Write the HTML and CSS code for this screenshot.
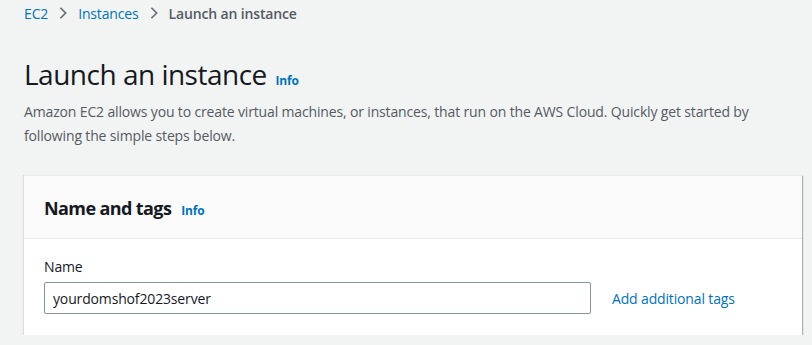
FILE: index.html
```html
<!DOCTYPE html>
<html lang="en">
<head>
    <meta charset="UTF-8">
    <meta name="viewport" content="width=device-width, initial-scale=1.0">
    <title>Launch an instance | EC2</title>
    <link rel="stylesheet" href="styles.css">
</head>
<body>
    <div class="page">
        <nav class="breadcrumbs">
            <a href="#">EC2</a>
            <svg class="chevron" viewBox="0 0 16 16" width="16" height="16"><path d="M5 2l6 6-6 6" fill="none" stroke="currentColor" stroke-width="2"/></svg>
            <a href="#">Instances</a>
            <svg class="chevron" viewBox="0 0 16 16" width="16" height="16"><path d="M5 2l6 6-6 6" fill="none" stroke="currentColor" stroke-width="2"/></svg>
            <span class="current">Launch an instance</span>
        </nav>

        <header class="page-header">
            <h1>Launch an instance <a href="#" class="info">Info</a></h1>
            <p>Amazon EC2 allows you to create virtual machines, or instances, that run on the AWS Cloud. Quickly get started by following the simple steps below.</p>
        </header>

        <section class="panel">
            <div class="panel-header">
                <h2>Name and tags <a href="#" class="info">Info</a></h2>
            </div>
            <div class="panel-body">
                <label for="name">Name</label>
                <div class="field-row">
                    <input type="text" id="name" value="yourdomshof2023server">
                    <a href="#" class="link">Add additional tags</a>
                </div>
            </div>
        </section>
    </div>
</body>
</html>
```

FILE: styles.css
```css
/* Reset */
* {
    margin: 0;
    padding: 0;
    box-sizing: border-box;
}

:root {
    --bg: #f2f3f3;
    --link: #0073bb;
    --text: #16191f;
    --muted: #545b64;
    --border: #879596;
}

body {
    font-family: 'Open Sans', 'Noto Sans', sans-serif;
    background: var(--bg);
    color: var(--text);
    font-size: 14px;
    letter-spacing: -0.15px;
}

a {
    color: var(--link);
    text-decoration: none;
}

.page {
    padding: 2px 10px 0 24px;
}

.breadcrumbs {
    display: flex;
    align-items: center;
    gap: 8px;
    height: 22px;
    font-size: 14px;
}

.chevron {
    color: #687078;
    width: 14px;
    height: 14px;
}

.breadcrumbs .current {
    color: var(--muted);
    font-weight: 600;
}

.page-header {
    padding-top: 32px;
}

h1 {
    font-size: 28px;
    font-weight: 400;
    line-height: 36px;
    letter-spacing: -0.5px;
}

.info {
    font-size: 12px;
    font-weight: 700;
    margin-left: 2px;
    letter-spacing: -0.2px;
}

.page-header p {
    color: var(--muted);
    line-height: 24px;
    margin-top: 1px;
    max-width: 750px;
}

.panel {
    margin-top: 27px;
    background: #fff;
    box-shadow: 1px 1px 1px rgba(0, 28, 36, 0.3), -1px 0 1px rgba(0, 28, 36, 0.1);
    border-top: 1px solid #eaeded;
}

.panel-header {
    background: #fafafa;
    border-bottom: 1px solid #eaeded;
    padding: 20px 20px;
    height: 63px;
}

h2 {
    font-size: 18px;
    font-weight: 700;
    line-height: 24px;
    letter-spacing: -0.6px;
}

h2 .info {
    margin-left: 6px;
}

.panel-body {
    padding: 17px 20px 21px;
}

label {
    display: block;
    line-height: 22px;
    margin-bottom: 4px;
}

.field-row {
    display: flex;
    align-items: center;
    gap: 21px;
}

input[type="text"] {
    width: 547px;
    height: 32px;
    padding: 0 8px;
    border: 1px solid var(--border);
    border-radius: 2px;
    font-family: inherit;
    font-size: 14px;
    letter-spacing: -0.15px;
    color: var(--text);
    background: #fff;
}
```
